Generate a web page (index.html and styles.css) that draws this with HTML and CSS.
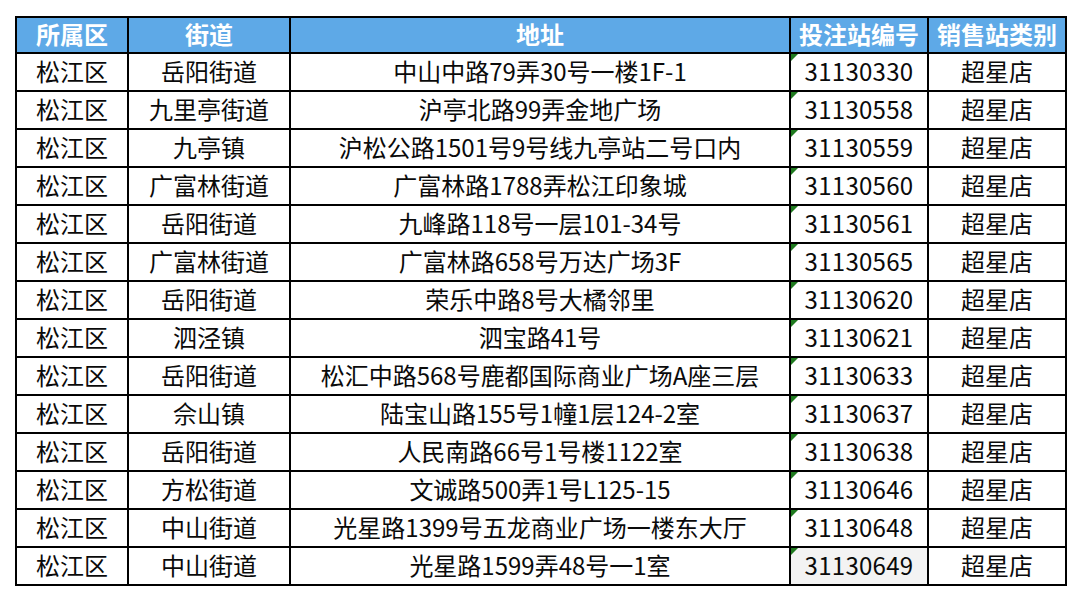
FILE: index.html
```html
<!DOCTYPE html>
<html lang="zh-CN">
<head>
<meta charset="utf-8">
<title>松江区投注站</title>
<link rel="stylesheet" href="styles.css">
</head>
<body>
<div class="sheet">
  <div class="cell head">所属区</div><div class="cell head">街道</div><div class="cell head">地址</div><div class="cell head">投注站编号</div><div class="cell head">销售站类别</div>

  <div class="cell">松江区</div><div class="cell">岳阳街道</div><div class="cell">中山中路79弄30号一楼1F-1</div><div class="cell num">31130330</div><div class="cell">超星店</div>
  <div class="cell">松江区</div><div class="cell">九里亭街道</div><div class="cell">沪亭北路99弄金地广场</div><div class="cell num">31130558</div><div class="cell">超星店</div>
  <div class="cell">松江区</div><div class="cell">九亭镇</div><div class="cell">沪松公路1501号9号线九亭站二号口内</div><div class="cell num">31130559</div><div class="cell">超星店</div>
  <div class="cell">松江区</div><div class="cell">广富林街道</div><div class="cell">广富林路1788弄松江印象城</div><div class="cell num">31130560</div><div class="cell">超星店</div>
  <div class="cell">松江区</div><div class="cell">岳阳街道</div><div class="cell">九峰路118号一层101-34号</div><div class="cell num">31130561</div><div class="cell">超星店</div>
  <div class="cell">松江区</div><div class="cell">广富林街道</div><div class="cell">广富林路658号万达广场3F</div><div class="cell num">31130565</div><div class="cell">超星店</div>
  <div class="cell">松江区</div><div class="cell">岳阳街道</div><div class="cell">荣乐中路8号大橘邻里</div><div class="cell num">31130620</div><div class="cell">超星店</div>
  <div class="cell">松江区</div><div class="cell">泗泾镇</div><div class="cell">泗宝路41号</div><div class="cell num">31130621</div><div class="cell">超星店</div>
  <div class="cell">松江区</div><div class="cell">岳阳街道</div><div class="cell">松汇中路568号鹿都国际商业广场A座三层</div><div class="cell num">31130633</div><div class="cell">超星店</div>
  <div class="cell">松江区</div><div class="cell">佘山镇</div><div class="cell">陆宝山路155号1幢1层124-2室</div><div class="cell num">31130637</div><div class="cell">超星店</div>
  <div class="cell">松江区</div><div class="cell">岳阳街道</div><div class="cell">人民南路66号1号楼1122室</div><div class="cell num">31130638</div><div class="cell">超星店</div>
  <div class="cell">松江区</div><div class="cell">方松街道</div><div class="cell">文诚路500弄1号L125-15</div><div class="cell num">31130646</div><div class="cell">超星店</div>
  <div class="cell">松江区</div><div class="cell">中山街道</div><div class="cell">光星路1399号五龙商业广场一楼东大厅</div><div class="cell num">31130648</div><div class="cell">超星店</div>
  <div class="cell">松江区</div><div class="cell">中山街道</div><div class="cell">光星路1599弄48号一1室</div><div class="cell num selected">31130649</div><div class="cell">超星店</div>
</div>
</body>
</html>
```

FILE: styles.css
```css
html, body {
  margin: 0;
  padding: 0;
  background: #ffffff;
}

body {
  padding: 16px 0 0 15px;
  font-family: "Noto Sans CJK SC", "Microsoft YaHei", sans-serif;
}

.sheet {
  display: grid;
  grid-template-columns: 110px 160px 498px 136px 136px;
  grid-template-rows: 34px repeat(14, 36px);
  gap: 2px;
  padding: 2px;
  width: max-content;
  background: #000000;
}

.cell {
  position: relative;
  display: flex;
  align-items: center;
  justify-content: center;
  padding-bottom: 3px;
  background: #ffffff;
  color: #0a0a0a;
  font-size: 24px;
  line-height: 1;
  white-space: nowrap;
}

.head {
  background: #5ea9e7;
  color: #ffffff;
  font-weight: 700;
}

.num {
  letter-spacing: 0.3px;
}

.num::before {
  content: "";
  position: absolute;
  left: 0;
  top: 0;
  width: 0;
  height: 0;
  border-top: 7px solid #1f7a1f;
  border-right: 7px solid transparent;
}

.selected {
  background: #f3f3f3;
}
```
